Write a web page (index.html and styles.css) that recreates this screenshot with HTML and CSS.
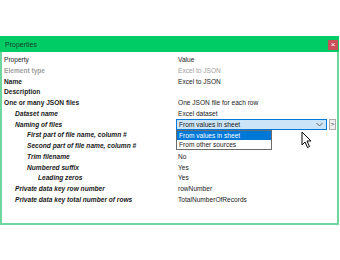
FILE: index.html
```html
<!DOCTYPE html>
<html>

<head>
    <title>Properties</title>
    <link rel="stylesheet" href="styles.css">
</head>

<body>
    <div class="window">
        <div class="title-bar">
            <span class="title">Properties</span>
            <span class="close-button">&#215;</span>
        </div>

        <div class="grid">
            <div class="row">
                <div class="name header">Property</div>
                <div class="value header">Value</div>
            </div>
            <div class="row">
                <div class="name bold disabled">Element type</div>
                <div class="value disabled">Excel to JSON</div>
            </div>
            <div class="row">
                <div class="name bold">Name</div>
                <div class="value">Excel to JSON</div>
            </div>
            <div class="row">
                <div class="name bold">Description</div>
                <div class="value"></div>
            </div>
            <div class="row">
                <div class="name bold">One or many JSON files</div>
                <div class="value">One JSON file for each row</div>
            </div>
            <div class="row">
                <div class="name sub level-1">Dataset name</div>
                <div class="value">Excel dataset</div>
            </div>
            <div class="row">
                <div class="name sub level-1">Naming of files</div>
                <div class="value dropdown-cell">
                    <div class="select-box">
                        <span>From values in sheet</span>
                        <svg class="chevron" width="7" height="5" viewBox="0 0 7 5">
                            <path d="M0.5 1 L3.5 4 L6.5 1" fill="none" stroke="#666" stroke-width="1" />
                        </svg>
                    </div>
                    <div class="more-button">&gt;</div>

                    <ul class="dropdown-list">
                        <li class="selected">From values in sheet</li>
                        <li>From other sources</li>
                    </ul>

                    <svg class="cursor" width="12" height="18" viewBox="0 0 12 18">
                        <path d="M1 1 L1 14 L4 11 L6.5 16.5 L8.5 15.5 L6 10 L10 10 Z" fill="#fff" stroke="#000" stroke-width="1" stroke-linejoin="round" />
                    </svg>
                </div>
            </div>
            <div class="row">
                <div class="name sub level-2">First part of file name, column #</div>
                <div class="value"></div>
            </div>
            <div class="row">
                <div class="name sub level-2">Second part of file name, column #</div>
                <div class="value"></div>
            </div>
            <div class="row">
                <div class="name sub level-2">Trim filename</div>
                <div class="value">No</div>
            </div>
            <div class="row">
                <div class="name sub level-2">Numbered suffix</div>
                <div class="value">Yes</div>
            </div>
            <div class="row">
                <div class="name sub level-3">Leading zeros</div>
                <div class="value">Yes</div>
            </div>
            <div class="row">
                <div class="name sub level-1">Private data key row number</div>
                <div class="value">rowNumber</div>
            </div>
            <div class="row">
                <div class="name sub level-1">Private data key total number of rows</div>
                <div class="value">TotalNumberOfRecords</div>
            </div>
        </div>
    </div>
</body>

</html>
```

FILE: styles.css
```css
* {
    box-sizing: border-box;
}

body {
    font-family: "Liberation Sans", Arial, sans-serif;
    font-size: 6.6px;
    color: #1a1a1a;
    background-color: #fff;
    margin: 0;
    padding-top: 36px;
}

.window {
    width: 339px;
    border: 2px solid #6fd6a0;
    border-top: none;
    background-color: #fff;
}

.title-bar {
    height: 16px;
    margin: 0 -2px;
    padding: 0 1px 0 5px;
    background-color: #00cc66;
    display: flex;
    align-items: center;
    justify-content: space-between;
}

.title {
    color: #1f3d2a;
    font-size: 7px;
}

.close-button {
    width: 10px;
    height: 10px;
    margin-top: 2px;
    background-color: #c9505a;
    color: #fff;
    font-size: 8px;
    line-height: 10px;
    text-align: center;
}

.grid {
    padding: 3px 0 17px 2px;
}

.row {
    display: flex;
    height: 10.75px;
    line-height: 10.75px;
    white-space: nowrap;
}

.name {
    width: 172px;
    flex-shrink: 0;
}

.value {
    flex: 1;
    padding-left: 2px;
}

.bold {
    font-weight: bold;
}

.sub {
    font-weight: bold;
    font-style: italic;
}

.disabled {
    color: #a0a0a0;
}

.level-1 {
    padding-left: 11px;
}

.level-2 {
    padding-left: 23px;
}

.level-3 {
    padding-left: 34px;
}

.dropdown-cell {
    position: relative;
    display: flex;
    align-items: center;
    padding-left: 0;
}

.select-box {
    width: 151px;
    height: 11px;
    border: 1px solid #0078d7;
    background-color: #cce4f7;
    display: flex;
    align-items: center;
    justify-content: space-between;
    padding-left: 2px;
    line-height: 9px;
}

.chevron {
    margin-right: 3px;
}

.more-button {
    width: 7px;
    height: 11px;
    margin-left: 2px;
    border: 1px solid #adadad;
    background-color: #f0f0f0;
    font-size: 6px;
    line-height: 9px;
    text-align: center;
}

.dropdown-list {
    position: absolute;
    top: 10px;
    left: 0;
    width: 96px;
    margin: 0;
    padding: 0;
    list-style: none;
    border: 1px solid #6b6b6b;
    background-color: #fff;
    z-index: 2;
}

.dropdown-list li {
    height: 9px;
    line-height: 9px;
    padding-left: 2px;
}

.dropdown-list .selected {
    background-color: #0078d7;
    color: #fff;
}

.cursor {
    position: absolute;
    left: 125px;
    top: 11px;
    z-index: 3;
}
```
